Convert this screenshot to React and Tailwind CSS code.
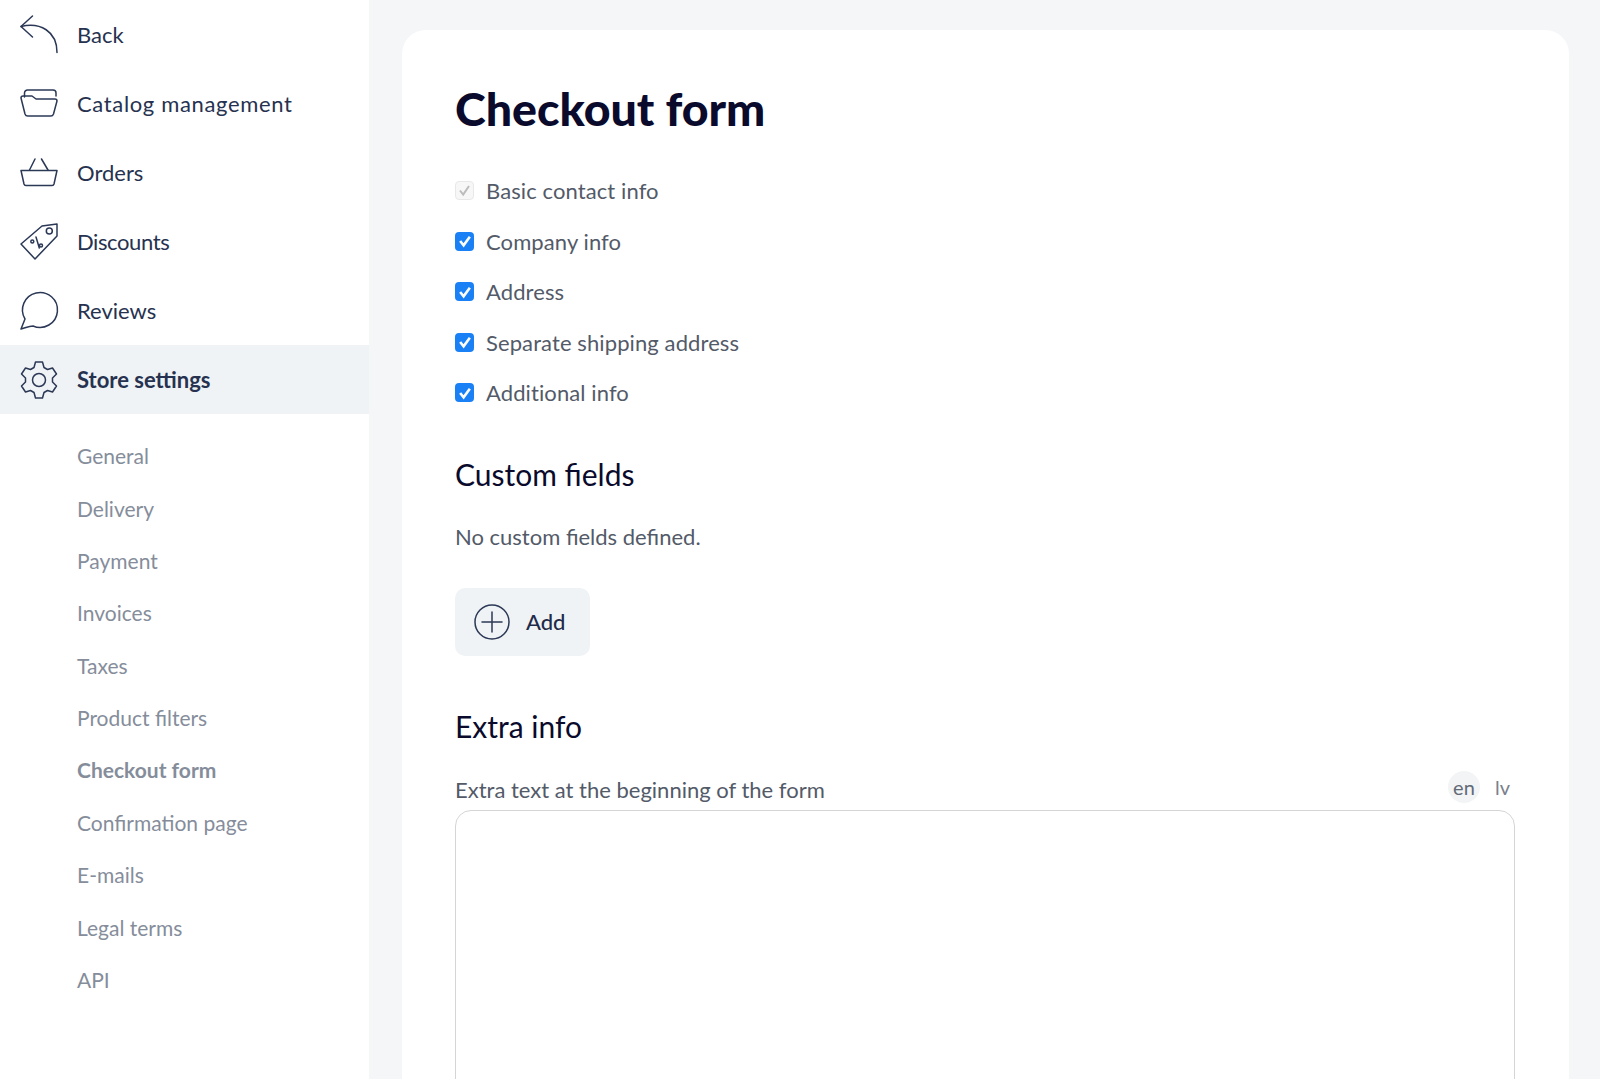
const ink = "#1f2b4a";

function Icon({ children }) {
  return (
    <svg width="38" height="38" viewBox="0 0 38 38" fill="none" stroke="#2b3856" strokeWidth="1.5" strokeLinecap="round" strokeLinejoin="round" className="shrink-0 overflow-visible">
      {children}
    </svg>
  );
}

const mainNav = [
  {
    label: "Back",
    icon: (
      <>
        <path d="M12.5 0 L1 10.5 L12.5 21" />
        <path d="M1 10.5 C20 6 37 15 37 36.5" />
      </>
    ),
  },
  {
    label: "Catalog management",
    track: "tracking-[0.65px]",
    icon: (
      <>
        <path d="M4.5 12 V8 a3 3 0 0 1 3 -3 H33 a3 3 0 0 1 3 3 V11" />
        <path d="M1 13 a2 2 0 0 1 2 -2 H12 l4 3 H35 a2 2 0 0 1 2 2 L33.5 29 a3 3 0 0 1 -3 2 H8 a3 3 0 0 1 -3 -2 Z" />
      </>
    ),
  },
  {
    label: "Orders",
    icon: (
      <>
        <path d="M1 16.5 H37 L34 30 a2 2 0 0 1 -2 1.5 H6 a2 2 0 0 1 -2 -1.5 Z" />
        <path d="M9.5 16 L15 5 M28 16 L21.5 5" />
      </>
    ),
  },
  {
    label: "Discounts",
    track: "tracking-[-0.4px]",
    icon: (
      <>
        <path d="M1 21 L22 3 L37 1 V13 L15 36 Z" />
        <circle cx="29.3" cy="8" r="3" />
        <circle cx="12.3" cy="18.5" r="1.5" />
        <circle cx="21" cy="22.5" r="1.5" />
        <path d="M16 14 L19.3 25" />
      </>
    ),
  },
  {
    label: "Reviews",
    icon: <path d="M1 37 L5 27 A17.5 17.5 0 1 1 13 34 C9 34 5 36 1 37 Z" />,
  },
  {
    label: "Store settings",
    active: true,
    icon: (
      <>
        <circle cx="19" cy="19" r="6.5" />
        <path d="M15.5 1 H22.5 L24 6.5 L27.5 8.5 L32.5 7 L36.5 13 L32.5 17 V21 L36.5 25 L32.5 31 L27.5 29.5 L24 31.5 L22.5 37 H15.5 L14 31.5 L10.5 29.5 L5.5 31 L1.5 25 L5.5 21 V17 L1.5 13 L5.5 7 L10.5 8.5 L14 6.5 Z" />
      </>
    ),
  },
];

const subNav = [
  "General",
  "Delivery",
  "Payment",
  "Invoices",
  "Taxes",
  "Product filters",
  "Checkout form",
  "Confirmation page",
  "E-mails",
  "Legal terms",
  "API",
];

const fields = [
  { label: "Basic contact info", disabled: true },
  { label: "Company info" },
  { label: "Address" },
  { label: "Separate shipping address" },
  { label: "Additional info" },
];

function Checkbox({ disabled }) {
  if (disabled) {
    return (
      <span className="flex h-[19px] w-[19px] items-center justify-center rounded-[4px] border border-[#e8e8e8] bg-[#f7f7f7]">
        <svg width="13" height="13" viewBox="0 0 13 13" fill="none" stroke="#bcbcbc" strokeWidth="2">
          <path d="M2 6.5 L5.2 10.5 L11 2" />
        </svg>
      </span>
    );
  }
  return (
    <span className="flex h-[19px] w-[19px] items-center justify-center rounded-[4px] bg-[#1a80f5]">
      <svg width="14" height="14" viewBox="0 0 13 13" fill="none" stroke="#ffffff" strokeWidth="2.4">
        <path d="M2 6.5 L5.2 10.5 L11 2.5" />
      </svg>
    </span>
  );
}

export default function App() {
  return (
    <div className="flex h-[1079px] overflow-hidden bg-[#f4f6f8] font-['Lato',sans-serif]">
      <aside className="w-[369px] shrink-0 bg-white">
        <nav>
          {mainNav.map((item) => (
            <div
              key={item.label}
              className={`flex h-[69px] items-center gap-[19px] pl-[20px] text-[22px] text-[#26324f] ${
                item.active ? "bg-[#f0f3f6] font-bold" : ""
              } ${item.track || ""}`}
            >
              <Icon>{item.icon}</Icon>
              <span>{item.label}</span>
            </div>
          ))}
        </nav>
        <ul className="mt-[16px] pl-[77px]">
          {subNav.map((label) => (
            <li
              key={label}
              className={`flex h-[52.35px] items-center text-[21px] text-[#858d9b] ${
                label === "Checkout form" ? "font-bold" : ""
              }`}
            >
              {label}
            </li>
          ))}
        </ul>
      </aside>

      <main className="min-w-0 flex-1 pl-[33px] pr-[31px] pt-[30px]">
        <div className="rounded-t-[24px] bg-white pl-[53px] pr-[54px] pt-[46px]">
          <h1 className="text-[46.5px] font-black leading-[64px] text-[#0a0a2c]">Checkout form</h1>

          <div className="mt-[25.5px] tracking-[0.1px]">
            {fields.map((f) => (
              <label key={f.label} className="flex h-[50.5px] items-center gap-[12px] text-[22px] text-[#535a68]">
                <Checkbox disabled={f.disabled} />
                <span>{f.label}</span>
              </label>
            ))}
          </div>

          <h2 className="mt-[33.5px] text-[30px] leading-[44px] text-[#0a0a2c]">Custom fields</h2>
          <p className="mt-[26px] text-[22px] leading-[30px] text-[#535a68]">No custom fields defined.</p>

          <button className="mt-[36px] flex h-[68px] w-[135px] items-center gap-[16px] rounded-[10px] bg-[#f0f3f6] pl-[19px] text-[22px] font-medium" style={{ color: ink }}>
            <svg width="36" height="36" viewBox="0 0 36 36" fill="none" stroke="#2b3856" strokeWidth="1.5" strokeLinecap="round">
              <circle cx="18" cy="18" r="17" />
              <path d="M18 8 V28 M8 18 H28" />
            </svg>
            Add
          </button>

          <h2 className="mt-[48px] text-[30px] leading-[44px] text-[#0a0a2c]">Extra info</h2>

          <div className="mt-[21px] flex items-center justify-between">
            <span className="pt-[4px] text-[22px] text-[#535a68]">Extra text at the beginning of the form</span>
            <div className="flex items-center gap-[13px] pr-[3px] text-[20px] text-[#7a818d]">
              <span className="flex h-[32px] w-[32px] items-center justify-center rounded-full bg-[#f2f4f6] text-[#636a77]">en</span>
              <span className="px-[2px]">lv</span>
            </div>
          </div>

          <div className="mt-[4px] h-[400px] rounded-[16px] border border-[#d5d5d5] bg-white" />
        </div>
      </main>
    </div>
  );
}
